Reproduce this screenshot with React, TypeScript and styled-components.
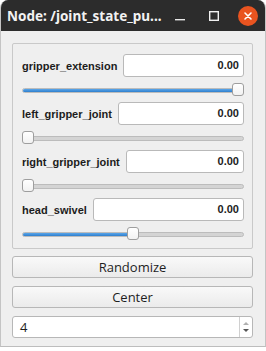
import React from 'react';
import styled, { createGlobalStyle } from 'styled-components';

const GlobalStyle = createGlobalStyle`
  html, body {
    margin: 0;
    padding: 0;
    background: #ffffff;
  }
`;

const joints = [
  { name: 'gripper_extension', value: '0.00', pos: 1 },
  { name: 'left_gripper_joint', value: '0.00', pos: 0 },
  { name: 'right_gripper_joint', value: '0.00', pos: 0 },
  { name: 'head_swivel', value: '0.00', pos: 0.5 },
];

const App: React.FC = () => {
  return (
    <>
      <GlobalStyle />
      <Window>
        <TitleBar>
          <Title>Node: /joint_state_pu...</Title>
          <Controls>
            <CtrlButton>
              <svg width="12" height="12" viewBox="0 0 12 12">
                <rect x="1" y="9" width="10" height="1.4" fill="#e8e8e8" />
              </svg>
            </CtrlButton>
            <CtrlButton>
              <svg width="12" height="12" viewBox="0 0 12 12">
                <rect x="1.7" y="1.7" width="8.6" height="8.6" fill="none" stroke="#f0f0f0" strokeWidth="1.4" />
              </svg>
            </CtrlButton>
            <CloseButton>
              <svg width="10" height="10" viewBox="0 0 10 10">
                <path d="M2 2 L8 8 M8 2 L2 8" stroke="#ffffff" strokeWidth="1.6" strokeLinecap="round" />
              </svg>
            </CloseButton>
          </Controls>
        </TitleBar>
        <Body>
          <GroupBox>
            {joints.map((j) => (
              <Joint key={j.name}>
                <Row>
                  <Label>{j.name}</Label>
                  <ValueInput>{j.value}</ValueInput>
                </Row>
                <Slider>
                  <Track>
                    <Fill style={{ width: `${j.pos * 100}%` }} />
                  </Track>
                  <Handle style={{ left: `calc(${j.pos * 100}% - ${j.pos * 12}px)` }} />
                </Slider>
              </Joint>
            ))}
          </GroupBox>
          <PushButton>Randomize</PushButton>
          <PushButton>Center</PushButton>
          <SpinBox>
            <SpinText>4</SpinText>
            <SpinArrows>
              <svg width="8" height="16" viewBox="0 0 8 16">
                <path d="M1 6 L4 3 L7 6 Z" fill="#b0b0b0" />
                <path d="M1 10 L4 13 L7 10 Z" fill="#555555" />
              </svg>
            </SpinArrows>
          </SpinBox>
        </Body>
      </Window>
    </>
  );
};

const Window = styled.div`
  width: 266px;
  height: 347px;
  box-sizing: border-box;
  background: #efefef;
  border-left: 1px solid #c4c4c4;
  border-right: 1px solid #c4c4c4;
  border-bottom: 1px solid #bdbdbd;
  border-radius: 8px 8px 0 0;
  display: flex;
  flex-direction: column;
  overflow: hidden;
`;

const TitleBar = styled.div`
  height: 31px;
  flex: none;
  background: #2c2c2c;
  display: flex;
  align-items: center;
  justify-content: space-between;
  padding: 0 7px 0 6px;
`;

const Title = styled.div`
  font-family: 'Noto Sans', 'DejaVu Sans', sans-serif;
  font-weight: 700;
  font-size: 13.5px;
  color: #f2f2f2;
  white-space: nowrap;
`;

const Controls = styled.div`
  display: flex;
  align-items: center;
  gap: 14px;
`;

const CtrlButton = styled.div`
  width: 20px;
  height: 20px;
  display: flex;
  align-items: center;
  justify-content: center;
`;

const CloseButton = styled.div`
  width: 20px;
  height: 20px;
  border-radius: 50%;
  background: #e95420;
  display: flex;
  align-items: center;
  justify-content: center;
`;

const Body = styled.div`
  padding: 12px 12px 0 11px;
  display: flex;
  flex-direction: column;
  gap: 8px;
`;

const GroupBox = styled.div`
  border: 1px solid #c9c9c9;
  border-radius: 2px;
  padding: 10px 8px 7px 9px;
  margin-bottom: -1px;
  display: flex;
  flex-direction: column;
  gap: 5px;
`;

const Joint = styled.div`
  display: flex;
  flex-direction: column;
  gap: 6px;
`;

const Row = styled.div`
  display: flex;
  align-items: center;
  gap: 6px;
`;

const Label = styled.div`
  font-family: 'Liberation Sans', Arial, sans-serif;
  font-weight: 700;
  font-size: 11px;
  color: #1c1c1c;
  white-space: nowrap;
`;

const ValueInput = styled.div`
  flex: 1;
  height: 23px;
  box-sizing: border-box;
  background: #ffffff;
  border: 1px solid #b9b9b9;
  border-radius: 3px;
  font-family: 'Liberation Sans', Arial, sans-serif;
  font-weight: 700;
  font-size: 11px;
  color: #1c1c1c;
  text-align: right;
  line-height: 21px;
  padding-right: 4px;
`;

const Slider = styled.div`
  position: relative;
  height: 14px;
  display: flex;
  align-items: center;
`;

const Track = styled.div`
  flex: 1;
  height: 5px;
  box-sizing: border-box;
  background: #d4d4d4;
  border: 1px solid #bcbcbc;
  border-radius: 3px;
  overflow: hidden;
  display: flex;
`;

const Fill = styled.div`
  height: 100%;
  background: linear-gradient(#5aa6ea, #2f7fcd);
`;

const Handle = styled.div`
  position: absolute;
  top: 0;
  width: 12px;
  height: 13px;
  box-sizing: border-box;
  background: linear-gradient(#ffffff, #f2f2f2);
  border: 1px solid #9e9e9e;
  border-radius: 3px;
`;

const PushButton = styled.div`
  height: 22px;
  box-sizing: border-box;
  border: 1px solid #b7b7b7;
  border-radius: 3px;
  background: linear-gradient(#f9f9f9, #ebebeb);
  font-family: 'Open Sans', 'Noto Sans', sans-serif;
  font-size: 13px;
  color: #1e1e1e;
  display: flex;
  align-items: center;
  justify-content: center;
`;

const SpinBox = styled.div`
  height: 22px;
  box-sizing: border-box;
  border: 1px solid #b7b7b7;
  border-radius: 3px;
  background: #ffffff;
  display: flex;
`;

const SpinText = styled.div`
  flex: 1;
  font-family: 'Open Sans', 'Noto Sans', sans-serif;
  font-size: 13px;
  color: #1e1e1e;
  padding-left: 7px;
  line-height: 20px;
`;

const SpinArrows = styled.div`
  width: 12px;
  border-left: 1px solid #d0d0d0;
  display: flex;
  align-items: center;
  justify-content: center;
`;

export default App;
